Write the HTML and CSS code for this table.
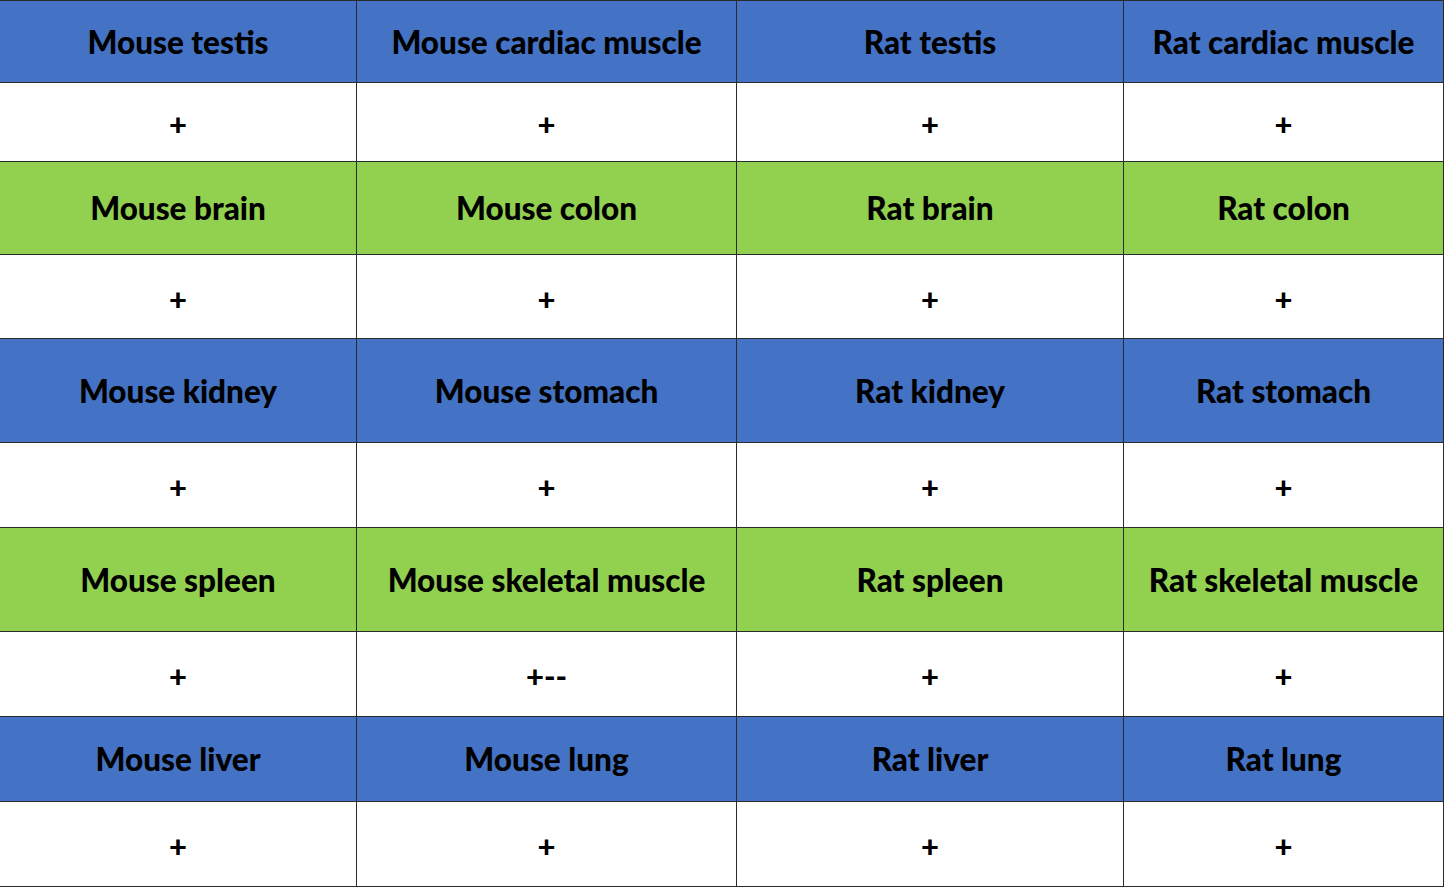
FILE: index.html
```html
<!DOCTYPE html>
<html>
<head>
<meta charset="utf-8">
<link rel="stylesheet" href="styles.css">
</head>
<body>
<div class="grid">
  <div class="cell blue">Mouse testis</div>
  <div class="cell blue">Mouse cardiac muscle</div>
  <div class="cell blue">Rat testis</div>
  <div class="cell blue">Rat cardiac muscle</div>
  <div class="cell val">+</div>
  <div class="cell val">+</div>
  <div class="cell val">+</div>
  <div class="cell val">+</div>

  <div class="cell green">Mouse brain</div>
  <div class="cell green">Mouse colon</div>
  <div class="cell green">Rat brain</div>
  <div class="cell green">Rat colon</div>
  <div class="cell val">+</div>
  <div class="cell val">+</div>
  <div class="cell val">+</div>
  <div class="cell val">+</div>

  <div class="cell blue">Mouse kidney</div>
  <div class="cell blue">Mouse stomach</div>
  <div class="cell blue">Rat kidney</div>
  <div class="cell blue">Rat stomach</div>
  <div class="cell val">+</div>
  <div class="cell val">+</div>
  <div class="cell val">+</div>
  <div class="cell val">+</div>

  <div class="cell green">Mouse spleen</div>
  <div class="cell green">Mouse skeletal muscle</div>
  <div class="cell green">Rat spleen</div>
  <div class="cell green">Rat skeletal muscle</div>
  <div class="cell val">+</div>
  <div class="cell val">+--</div>
  <div class="cell val">+</div>
  <div class="cell val">+</div>

  <div class="cell blue">Mouse liver</div>
  <div class="cell blue">Mouse lung</div>
  <div class="cell blue">Rat liver</div>
  <div class="cell blue">Rat lung</div>
  <div class="cell val">+</div>
  <div class="cell val">+</div>
  <div class="cell val">+</div>
  <div class="cell val">+</div>
</div>
</body>
</html>
```
FILE: styles.css
```css
html, body {
  margin: 0;
  padding: 0;
  background: #ffffff;
}
.grid {
  display: grid;
  grid-template-columns: 357px 380px 387px 320px;
  grid-template-rows: 82px 79px 93px 84px 104px 85px 104px 85px 85px 85px;
  width: 1444px;
  border-top: 1px solid #2b2b2b;
  box-sizing: border-box;
  font-family: Lato, "Open Sans", "Liberation Sans", sans-serif;
  font-weight: 900;
  color: #000;
}
.cell {
  display: flex;
  align-items: center;
  justify-content: center;
  border-right: 1px solid #2b2b2b;
  border-bottom: 1px solid #2b2b2b;
  font-size: 31.5px;
  white-space: nowrap;
}
.blue { background: #4472c4; }
.green { background: #92d050; }
.val {
  background: #ffffff;
  font-size: 31px;
  padding-top: 4px;
}
```
